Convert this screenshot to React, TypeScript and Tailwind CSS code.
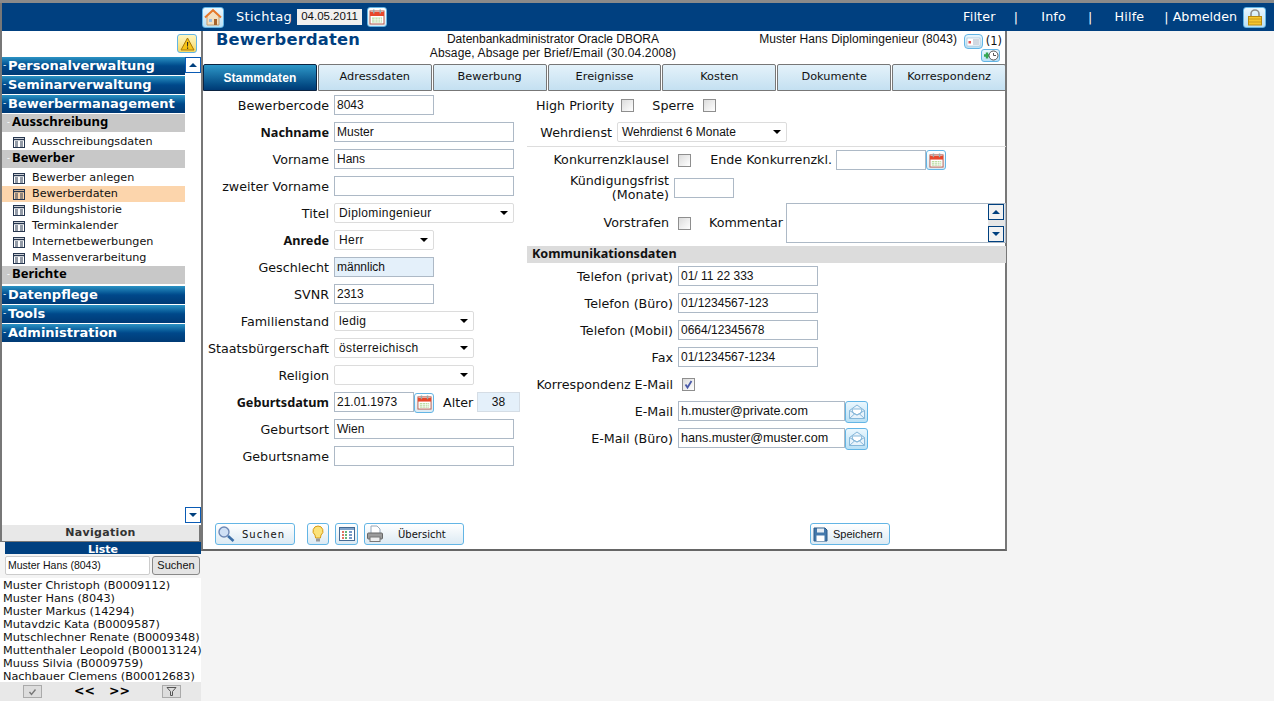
import type { ReactNode } from "react"

const tabs = ["Stammdaten", "Adressdaten", "Bewerbung", "Ereignisse", "Kosten", "Dokumente", "Korrespondenz"]

const people = [
  "Muster Christoph (B0009112)",
  "Muster Hans (8043)",
  "Muster Markus (14294)",
  "Mutavdzic Kata (B0009587)",
  "Mutschlechner Renate (B0009348)",
  "Muttenthaler Leopold (B00013124)",
  "Muuss Silvia (B0009759)",
  "Nachbauer Clemens (B00012683)",
]

const sans = "font-['DejaVu_Sans',sans-serif]"
const noto = "font-['Noto_Sans',sans-serif]"
const arial = "font-['Liberation_Sans',sans-serif]"
const lightBlue = "from-[#eaf7fe] to-[#b9e0f5]"

function IconBox({ className, grad = "from-[#ffffff] to-[#dceaf3]", children }: { className: string; grad?: string; children: ReactNode }) {
  return (
    <span className={`flex shrink-0 items-center justify-center rounded-[3px] border border-[#63b5e5] bg-gradient-to-b ${grad} ${className}`}>
      {children}
    </span>
  )
}

function Calendar({ size = 16 }: { size?: number }) {
  return (
    <svg width={size} height={size} viewBox="0 0 16 16">
      <rect x="1" y="2" width="14" height="13" fill="#fff" stroke="#b55a4a" />
      <rect x="1" y="3" width="14" height="4" fill="#e8472b" />
      <rect x="4" y="0.5" width="1.5" height="4" fill="#9aa" />
      <rect x="10.5" y="0.5" width="1.5" height="4" fill="#9aa" />
      <path d="M3 8.5h10v5H3z" fill="#b9dba0" />
      <path d="M3 10.2h10M3 12h10M6 8.5v5M9 8.5v5M11.5 8.5v5" stroke="#fff" strokeWidth="0.7" />
    </svg>
  )
}

function Envelope() {
  return (
    <svg width="18" height="16" viewBox="0 0 18 16" fill="none" stroke="#86b7d9">
      <path d="M1.5 6.5 9 1l7.5 5.5v8h-15z" fill="#e8f3fb" />
      <path d="M4 5h10l-1 4-4 2-4-2z" fill="#fff" />
      <path d="M1.5 6.5 9 11l7.5-4.5M1.500 14.500 7 9.500M16.500 14.500 11 9.500" />
    </svg>
  )
}

function Label({ children, bold }: { children: ReactNode; bold?: boolean }) {
  return (
    <span className={`block whitespace-nowrap text-right leading-[14px] text-[#111] ${bold ? `pb-px text-[12.7px] font-bold ${noto}` : `text-[12.7px] ${sans}`}`}>{children}</span>
  )
}

function TextBox({ value = "", className, tint, big }: { value?: string; className: string; tint?: boolean; big?: boolean }) {
  return (
    <span className={`mb-px flex h-[20px] shrink-0 items-center border border-[#adb9c6] pl-[2px] text-[#111] ${arial} ${big ? "text-[12.6px]" : "text-[12px]"} ${tint ? "bg-[#e4f0fa]" : "bg-white"} ${className}`}>
      {value}
    </span>
  )
}

function Select({ value = "", className }: { value?: string; className: string }) {
  return (
    <span className={`mb-px flex h-[20px] shrink-0 items-center justify-between rounded-[2px] border border-[#dcdcdc] bg-white pl-[4px] pr-[5px] text-[12px] text-[#111] ${arial} ${className}`}>
      <span>{value}</span>
      <span className="h-0 w-0 border-x-[4px] border-t-[4px] border-x-transparent border-t-black" />
    </span>
  )
}

function Row({ label, bold, children }: { label: string; bold?: boolean; children: ReactNode }) {
  return (
    <div className="flex h-[27px] items-center">
      <div className="flex w-[131px] shrink-0 justify-end pr-[5px]">
        <Label bold={bold}>{label}</Label>
      </div>
      {children}
    </div>
  )
}

function Kontakt({ label, children }: { label: string; children: ReactNode }) {
  return (
    <div className="flex h-[27px] items-center">
      <div className="flex w-[151px] shrink-0 justify-end pr-[5px]">
        <Label>{label}</Label>
      </div>
      {children}
    </div>
  )
}

function Check({ checked }: { checked?: boolean }) {
  return (
    <span className="flex h-[13px] w-[13px] shrink-0 items-center justify-center border border-[#8e8e8e] bg-gradient-to-br from-[#dcdcdc] to-[#ffffff]">
      {checked && (
        <svg width="11" height="11" viewBox="0 0 11 11" fill="none">
          <path d="M2.5 5.5 4.5 8.5 8.5 2" stroke="#4a5aa8" strokeWidth="1.8" />
        </svg>
      )}
    </span>
  )
}

function MenuHead({ title, sub }: { title: string; sub?: boolean }) {
  if (sub) {
    return (
      <div className={`flex h-[18px] items-center bg-[#c8c8c8] pb-[2px] text-[13px] font-bold text-black ${noto}`}>
        <span className="w-[10px] pl-[5px] text-[9px] font-normal text-white">-</span>
        {title}
      </div>
    )
  }
  return (
    <div className={`mb-px flex h-[18px] items-center bg-gradient-to-b from-[#2b93c4] via-[#00488a] to-[#003a75] text-[13px] font-bold text-white ${sans}`}>
      <span className="w-[6px] pl-[1px] text-[9px] font-normal">-</span>
      {title}
    </div>
  )
}

function MenuItem({ title, active }: { title: string; active?: boolean }) {
  return (
    <div className={`flex h-[16px] items-center pt-px text-[11.2px] text-[#111] ${sans} ${active ? "bg-[#fcd5ac]" : ""}`}>
      <svg className="ml-[11px] mr-[7px]" width="12" height="11" viewBox="0 0 12 11" fill="none" stroke="#26364f">
        <rect x="0.5" y="0.5" width="11" height="10" />
        <path d="M0.5 2.500h11" strokeWidth="1.500" />
        <path d="M2 5h3M2 7h3M2 9h3M7 5h3M7 7h3M7 9h3" />
      </svg>
      {title}
    </div>
  )
}

function ScrollBtn({ up }: { up?: boolean }) {
  return (
    <span className="flex h-[16px] w-[16px] items-center justify-center border border-[#0a5bb5] bg-white">
      <span className={`h-0 w-0 border-x-[4px] border-x-transparent ${up ? "border-b-[4px] border-b-[#00407f]" : "border-t-[4px] border-t-[#00407f]"}`} />
    </span>
  )
}

function Sidebar() {
  return (
    <aside className="flex w-[201px] shrink-0 flex-col">
      <div className="flex h-[494px] flex-col border-l-2 border-[#777] bg-white pb-[2px]">
        <div className="flex justify-end pr-[4px] pt-[3px]">
          <IconBox className="h-[19px] w-[20px]" grad="from-[#fff6c0] to-[#f5d860]">
            <svg width="15" height="14" viewBox="0 0 15 14">
              <path d="M7.5 1 14 13H1z" fill="#f7c416" stroke="#a8780a" />
              <path d="M7 5h1.200l-.2 4.500h-.8zM7 10.400h1.200v1.300H7z" fill="#222" />
            </svg>
          </IconBox>
        </div>
        <div className="mt-[4px] flex flex-1">
          <div className="w-[184px]">
            <MenuHead title="Personalverwaltung" />
            <MenuHead title="Seminarverwaltung" />
            <MenuHead title="Bewerbermanagement" />
            <MenuHead title="Ausschreibung" sub />
            <div className="flex h-[18px] flex-col justify-end"><MenuItem title="Ausschreibungsdaten" /></div>
            <MenuHead title="Bewerber" sub />
            <div className="h-[2px]" />
            <MenuItem title="Bewerber anlegen" />
            <MenuItem title="Bewerberdaten" active />
            <MenuItem title="Bildungshistorie" />
            <MenuItem title="Terminkalender" />
            <MenuItem title="Internetbewerbungen" />
            <MenuItem title="Massenverarbeitung" />
            <MenuHead title="Berichte" sub />
            <div className="h-[2px]" />
            <MenuHead title="Datenpflege" />
            <MenuHead title="Tools" />
            <MenuHead title="Administration" />
          </div>
          <div className="flex flex-col justify-between">
            <ScrollBtn up />
            <ScrollBtn />
          </div>
        </div>
      </div>
      <div className={`flex h-[16px] items-center justify-center border-x-2 border-[#777] bg-[#e8e8e8] pt-px text-[11px] font-bold tracking-[0.3px] text-[#333] ${sans}`}>
        Navigation
      </div>
      <div className="h-[1px] bg-[#777]" />
      <div className={`ml-[5px] flex h-[12px] items-center justify-center bg-[#004080] pt-[2px] text-[11px] font-bold leading-none text-white ${sans}`}>
        Liste
      </div>
      <div className="flex h-[24px] items-start bg-[#f4f4f4] pl-[5px] pt-[2px]">
        <span className={`flex h-[19px] w-[145px] items-center rounded-[2px] border border-[#ccc] bg-white pl-[2px] text-[10.5px] text-[#111] ${arial}`}>
          Muster Hans (8043)
        </span>
        <span className={`ml-[2px] flex h-[19px] w-[48px] items-center justify-center rounded-[3px] border border-[#888] bg-[#e4e4e4] text-[11px] text-[#111] ${arial}`}>
          Suchen
        </span>
      </div>
      <div className={`h-[104px] bg-white pl-[3px] pt-px text-[11.3px] leading-[13px] text-[#111] ${sans}`}>
        {people.map((name) => (
          <div key={name} className="whitespace-nowrap">{name}</div>
        ))}
      </div>
      <div className={`flex h-[19px] items-center bg-[#e8e8e8] pl-[23px] text-black ${sans}`}>
        <span className="flex h-[13px] w-[19px] items-center justify-center border border-[#aaa] bg-[#ddd]">
          <svg width="9" height="8" viewBox="0 0 9 8" fill="none"><path d="M1.500 4 3.500 6.500 7.500 1.500" stroke="#777" strokeWidth="1.400" /></svg>
        </span>
        <span className="ml-[32px] w-[18px] whitespace-nowrap text-[12.5px] font-bold leading-none">&lt;&lt;</span>
        <span className="ml-[17px] w-[18px] whitespace-nowrap text-[12.5px] font-bold leading-none">&gt;&gt;</span>
        <span className="ml-[35px] flex h-[13px] w-[19px] items-center justify-center border border-[#aaa] bg-[#ddd]">
          <svg width="11" height="9" viewBox="0 0 11 9" fill="none" stroke="#555"><path d="M1 .5h9L6.500 4.500v4h-2v-4z" /></svg>
        </span>
      </div>
    </aside>
  )
}

function StammForm() {
  return (
    <div className="w-[324px] shrink-0 pt-[1px]">
      <Row label="Bewerbercode"><TextBox value="8043" className="w-[100px]" /></Row>
      <Row label="Nachname" bold><TextBox value="Muster" className="w-[180px]" /></Row>
      <Row label="Vorname"><TextBox value="Hans" className="w-[180px]" /></Row>
      <Row label="zweiter Vorname"><TextBox className="w-[180px]" /></Row>
      <Row label="Titel"><Select value="Diplomingenieur" className="w-[180px] tracking-[0.4px]" /></Row>
      <Row label="Anrede" bold><Select value="Herr" className="w-[100px] tracking-[0.4px]" /></Row>
      <Row label="Geschlecht"><TextBox value="männlich" tint className="w-[100px]" /></Row>
      <Row label="SVNR"><TextBox value="2313" className="w-[100px]" /></Row>
      <Row label="Familienstand"><Select value="ledig" className="w-[140px] tracking-[0.4px]" /></Row>
      <Row label="Staatsbürgerschaft"><Select value="österreichisch" className="w-[140px] tracking-[0.4px]" /></Row>
      <Row label="Religion"><Select className="w-[140px]" /></Row>
      <Row label="Geburtsdatum" bold>
        <TextBox value="21.01.1973" className="w-[80px]" />
        <IconBox className="h-[20px] w-[20px]"><Calendar size={15} /></IconBox>
        <span className="ml-[9px] w-[30px]"><Label>Alter</Label></span>
        <span className={`mb-px ml-[4px] flex h-[20px] w-[43px] items-center justify-center border border-[#d5dde5] bg-[#e4f0fa] text-[12px] text-[#111] ${arial}`}>38</span>
      </Row>
      <Row label="Geburtsort"><TextBox value="Wien" className="w-[180px]" /></Row>
      <Row label="Geburtsname"><TextBox className="w-[180px]" /></Row>
    </div>
  )
}

function DetailForm() {
  return (
    <div className="flex-1 pt-[1px]">
      <div className="flex h-[27px] items-center pl-[9px]">
        <span className="w-[76px]"><Label>High Priority</Label></span>
        <span className="ml-[9px]"><Check /></span>
        <span className="ml-[18px] w-[42px]"><Label>Sperre</Label></span>
        <span className="ml-[9px]"><Check /></span>
      </div>
      <div className="flex h-[27px] items-center pl-[13px]">
        <span className="w-[72px]"><Label>Wehrdienst</Label></span>
        <span className="ml-[5px]"><Select value="Wehrdienst 6 Monate" className="w-[170px]" /></span>
      </div>
      <div className="h-[1px] bg-[#ddd]" />
      <div className="flex h-[26px] items-center">
        <span className="w-[142px]"><Label>Konkurrenzklausel</Label></span>
        <span className="ml-[9px]"><Check /></span>
        <span className="ml-[18px] w-[123px]"><Label>Ende Konkurrenzkl.</Label></span>
        <span className="ml-[4px]"><TextBox className="w-[90px]" /></span>
        <IconBox className="h-[20px] w-[20px]"><Calendar size={15} /></IconBox>
      </div>
      <div className="flex h-[30px] items-center">
        <div className="w-[142px]"><Label>Kündigungsfrist<br />(Monate)</Label></div>
        <span className="ml-[5px]"><TextBox className="w-[60px]" /></span>
      </div>
      <div className="flex h-[40px] items-center">
        <div className="w-[142px]"><Label>Vorstrafen</Label></div>
        <span className="ml-[9px]"><Check /></span>
        <span className="ml-[18px] w-[72px]"><Label>Kommentar</Label></span>
        <span className="ml-[5px] flex h-[40px] w-[220px] justify-end border border-[#adb9c6] bg-white">
          <span className="flex w-[17px] flex-col justify-between bg-[#e6e6e6]">
            <span className="flex h-[16px] w-[16px] items-center justify-center border border-[#00407f] bg-[#f2f2f2]"><span className="h-0 w-0 border-x-[4px] border-b-[4px] border-x-transparent border-b-[#00407f]" /></span>
            <span className="flex h-[16px] w-[16px] items-center justify-center border border-[#00407f] bg-[#f2f2f2]"><span className="h-0 w-0 border-x-[4px] border-t-[4px] border-x-transparent border-t-[#00407f]" /></span>
          </span>
        </span>
      </div>
      <div className={`mt-[3px] flex h-[17px] items-center bg-[#dcdcdc] pl-[5px] text-[12.6px] font-bold text-[#111] ${noto}`}>
        Kommunikationsdaten
      </div>
      <Kontakt label="Telefon (privat)"><TextBox value="01/ 11 22 333" className="w-[140px]" /></Kontakt>
      <Kontakt label="Telefon (Büro)"><TextBox value="01/1234567-123" className="w-[140px]" /></Kontakt>
      <Kontakt label="Telefon (Mobil)"><TextBox value="0664/12345678" className="w-[140px]" /></Kontakt>
      <Kontakt label="Fax"><TextBox value="01/1234567-1234" className="w-[140px]" /></Kontakt>
      <div className="flex h-[27px] items-center">
        <span className="w-[146px]"><Label>Korrespondenz E-Mail</Label></span>
        <span className="ml-[9px]"><Check checked /></span>
      </div>
      <Kontakt label="E-Mail">
        <TextBox value="h.muster@private.com" big className="w-[167px]" />
        <IconBox className="h-[22px] w-[23px]" grad={lightBlue}><Envelope /></IconBox>
      </Kontakt>
      <Kontakt label="E-Mail (Büro)">
        <TextBox value="hans.muster@muster.com" big className="w-[167px]" />
        <IconBox className="h-[22px] w-[23px]" grad={lightBlue}><Envelope /></IconBox>
      </Kontakt>
    </div>
  )
}

function Toolbar() {
  return (
    <div className={`flex h-[22px] items-center pl-[12px] text-[10px] text-[#111] ${sans}`}>
      <IconBox className="h-[22px] w-[80px] !justify-start gap-[7px] pl-[1px] tracking-[1px]">
        <svg width="18" height="18" viewBox="0 0 18 18" fill="none">
          <circle cx="7" cy="7" r="5" fill="#cfe0f5" stroke="#6e88b5" strokeWidth="1.400" />
          <path d="m11 11 5.500 5" stroke="#3c6fa8" strokeWidth="2.600" />
        </svg>
        Suchen
      </IconBox>
      <IconBox className="ml-[12px] h-[22px] w-[22px]">
        <svg width="12" height="18" viewBox="0 0 12 18">
          <path d="M6 1a5 5 0 0 1 3 9l-.6 3H3.600L3 10a5 5 0 0 1 3-9z" fill="#fbe27a" stroke="#d79a12" />
          <rect x="4" y="13.500" width="4" height="3" fill="#999" />
        </svg>
      </IconBox>
      <IconBox className="ml-[6px] h-[22px] w-[23px]">
        <svg width="16" height="14" viewBox="0 0 16 14" fill="none">
          <rect x="0.500" y="0.500" width="15" height="13" fill="#fff" stroke="#456a93" />
          <rect x="1" y="1" width="14" height="2" fill="#7fa2c9" />
          <path d="M3 5h2M3 8h2M3 11h2" stroke="#d9462e" strokeWidth="1.500" />
          <path d="M6 5h2M6 8h2M6 11h2" stroke="#39a04b" strokeWidth="1.500" />
          <path d="M10 5h3M10 8h3M10 11h3" stroke="#4a78b5" strokeWidth="1.500" />
        </svg>
      </IconBox>
      <IconBox className="ml-[6px] h-[22px] w-[100px] !justify-start pl-[1px]">
        <svg width="18" height="18" viewBox="0 0 18 18">
          <path d="M5 1h6l3 3v5H5z" fill="#fff" stroke="#9aa8b8" />
          <rect x="1.500" y="8" width="15" height="6" rx="1" fill="#9b9b9b" stroke="#666" />
          <rect x="4" y="12" width="10" height="4.500" fill="#eee" stroke="#777" />
        </svg>
        <span className="ml-[14px]">Übersicht</span>
      </IconBox>
      <IconBox className={`ml-[346px] h-[22px] w-[80px] !justify-start gap-[5px] pl-[2px] ${arial}`}>
        <svg width="15" height="15" viewBox="0 0 15 15">
          <path d="M1 1h11l2 2v11H1z" fill="#4378ab" stroke="#2c5a88" />
          <rect x="4" y="1.500" width="7" height="4" fill="#e6edf4" />
          <rect x="3.500" y="8.500" width="8" height="5.500" fill="#fff" />
        </svg>
        <span className="text-[11px]">Speichern</span>
      </IconBox>
    </div>
  )
}

function Main() {
  return (
    <main className="flex h-[520px] w-[806px] shrink-0 flex-col border-x-2 border-b-2 border-x-[#777] border-b-[#666] bg-white">
      <div className="flex h-[33px] shrink-0 text-[#111]">
        <h1 className={`w-[215px] pl-[13px] text-[16.3px] font-bold leading-[18px] tracking-[0.2px] text-[#004080] ${sans}`}>Bewerberdaten</h1>
        <div className={`w-[270px] pt-[1px] text-center text-[12px] leading-[14px] ${arial}`}>
          <div>Datenbankadministrator Oracle DBORA</div>
          <div className="tracking-[0.13px]">Absage, Absage per Brief/Email (30.04.2008)</div>
        </div>
        <div className="flex flex-1 justify-end pr-[3px]">
          <span className={`whitespace-nowrap pr-[5px] pt-[1px] text-[12px] leading-[14px] tracking-[0.05px] ${arial}`}>Muster Hans Diplomingenieur (8043)</span>
          <div className="flex w-[40px] flex-col items-end pt-[3px]">
            <div className="flex h-[15px] items-center gap-[3px] text-[11.5px] leading-none">
              <IconBox className="h-[15px] w-[19px] rounded-[4px]" grad={lightBlue}>
                <svg width="15" height="10" viewBox="0 0 15 10">
                  <rect x="1" y="1" width="13" height="8" fill="#fff" stroke="#9db8cc" strokeWidth="0.6" />
                  <rect x="2.500" y="4" width="2.500" height="2.500" fill="#e05555" />
                  <path d="M7 3h6M7 5h6M7 7h6" stroke="#8aa0b5" strokeWidth="0.8" />
                </svg>
              </IconBox>
              <span className={sans}>(1)</span>
            </div>
            <IconBox className="mr-[2px] h-[13px] w-[19px]" grad={lightBlue}>
              <svg width="17" height="11" viewBox="0 0 17 11">
                <path d="M2 5.500h6M5 2.500v6" stroke="#34a853" strokeWidth="2.400" />
                <circle cx="11.500" cy="5.500" r="4.500" fill="#fff" stroke="#555" />
                <path d="M11.500 3v2.500h2.500" stroke="#555" fill="none" />
              </svg>
            </IconBox>
          </div>
        </div>
      </div>
      <div className="-mr-[1px] flex h-[27px] shrink-0 gap-px">
        {tabs.map((t, i) => (
          <div
            key={t}
            className={`flex h-[27px] w-[114px] items-center justify-center rounded-t-[2px] ${
              i === 0
                ? `border border-[#0b2340] bg-gradient-to-b from-[#2e98c8] to-[#003a75] text-[12px] font-bold tracking-[0.1px] text-white ${arial}`
                : `border border-[#777] bg-gradient-to-b from-[#e4f2fa] to-[#c4e0f1] text-[11.3px] text-[#111] ${sans}`
            }`}
          >
            {t}
          </div>
        ))}
      </div>
      <div className="flex flex-1 flex-col">
        <div className="flex flex-1">
          <StammForm />
          <DetailForm />
        </div>
        <div className="h-[26px] shrink-0"><Toolbar /></div>
      </div>
    </main>
  )
}

export default function App() {
  return (
    <div className="flex h-[701px] w-[1274px] flex-col overflow-hidden bg-[#f4f4f4]">
      <div className="h-[3px] shrink-0 bg-[#8a8a8a]" />
      <header className={`flex h-[28px] shrink-0 items-center border-l-2 border-[#777] bg-[#004080] text-[13px] text-white ${sans}`}>
        <IconBox className="ml-[200px] h-[21px] w-[22px]" grad={lightBlue}>
          <svg width="18" height="18" viewBox="0 0 18 18">
            <path d="M3 8v9h12V8L9 3z" fill="#f3dfc0" stroke="#c9a070" />
            <path d="M1 9.500 9 2l8 7.500" fill="none" stroke="#e8782a" strokeWidth="2" />
            <rect x="10" y="11" width="3" height="6" fill="#a5622a" />
            <rect x="5" y="11" width="3" height="3" fill="#9dbfe0" />
          </svg>
        </IconBox>
        <span className="ml-[12px] w-[56px] whitespace-nowrap tracking-[0.3px]">Stichtag</span>
        <span className={`ml-[5px] flex h-[16px] w-[65px] items-center justify-center bg-[#f0f0f0] text-[11.5px] text-[#111] ${arial}`}>04.05.2011</span>
        <IconBox className="ml-[5px] h-[20px] w-[20px]"><Calendar size={16} /></IconBox>
        <nav className="ml-auto flex items-center pr-[8px] text-[12.7px] tracking-[0.2px]">
          <span>Filter</span>
          <span className="ml-[18px]">|</span>
          <span className="ml-[23px]">Info</span>
          <span className="ml-[22px]">|</span>
          <span className="ml-[22px]">Hilfe</span>
          <span className="ml-[20px] tracking-normal">| Abmelden</span>
          <IconBox className="ml-[6px] h-[21px] w-[23px]" grad={lightBlue}>
            <svg width="16" height="17" viewBox="0 0 16 17">
              <path d="M4 8V5a4 4 0 0 1 8 0v3" fill="none" stroke="#8d8d8d" strokeWidth="1.600" />
              <rect x="1.500" y="7.500" width="13" height="8.500" fill="#f5c52e" stroke="#b98a10" />
              <path d="M2 10h12M2 13h12" stroke="#c99a1c" />
            </svg>
          </IconBox>
        </nav>
      </header>
      <div className="flex shrink-0">
        <Sidebar />
        <Main />
      </div>
    </div>
  )
}
